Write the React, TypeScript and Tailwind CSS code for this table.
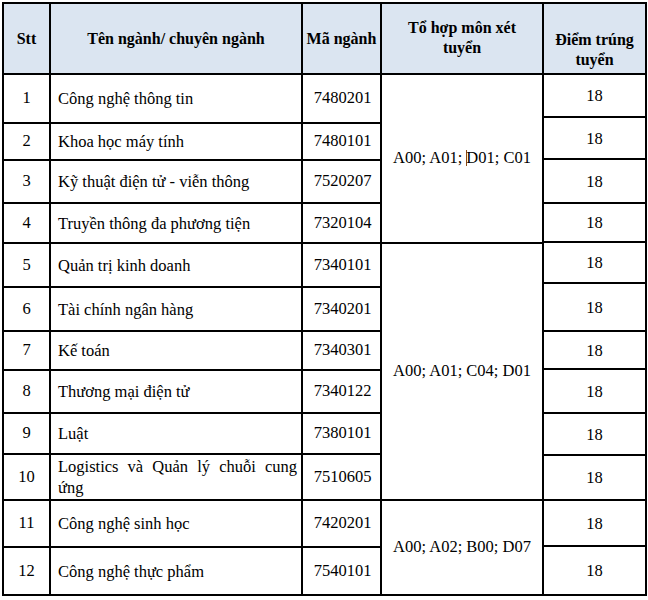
import React from 'react';

type Row = { stt: number; name: string; code: string; h: number };

const rows: Row[] = [
  { stt: 1, name: 'Công nghệ thông tin', code: '7480201', h: 49 },
  { stt: 2, name: 'Khoa học máy tính', code: '7480101', h: 37 },
  { stt: 3, name: 'Kỹ thuật điện tử - viễn thông', code: '7520207', h: 43 },
  { stt: 4, name: 'Truyền thông đa phương tiện', code: '7320104', h: 40 },
  { stt: 5, name: 'Quản trị kinh doanh', code: '7340101', h: 44 },
  { stt: 6, name: 'Tài chính ngân hàng', code: '7340201', h: 44 },
  { stt: 7, name: 'Kế toán', code: '7340301', h: 39 },
  { stt: 8, name: 'Thương mại điện tử', code: '7340122', h: 43 },
  { stt: 9, name: 'Luật', code: '7380101', h: 41 },
  { stt: 10, name: 'Logistics và Quản lý chuỗi cung ứng', code: '7510605', h: 46 },
  { stt: 11, name: 'Công nghệ sinh học', code: '7420201', h: 47 },
  { stt: 12, name: 'Công nghệ thực phẩm', code: '7540101', h: 48 },
];

// the score column's lines don't quite line up with the rest in the source
const scoreHeights = [43, 42, 44, 39, 41, 48, 38, 44, 42, 45, 46, 49];

export default function App() {
  return (
    <div className="w-[648px] h-[600px] bg-white pt-[2px] pl-[2px]">
      <div className="w-[645px] border-2 border-black text-black font-['Liberation_Serif']">
        {/* header */}
        <div className="flex h-[69px] bg-[#dbe5f1] font-bold text-[16px] leading-[20px] text-center">
          <div className="w-[45px] flex items-center justify-center">Stt</div>
          <div className="w-[252px] border-l-2 border-black flex items-center justify-center">
            Tên ngành/ chuyên ngành
          </div>
          <div className="w-[79px] border-l-2 border-black flex items-center justify-center">Mã ngành</div>
          <div className="w-[162px] border-l-2 border-black flex items-center justify-center pb-[2px]">
            <span>
              Tổ hợp môn xét
              <br />
              tuyển
            </span>
          </div>
          <div className="flex-1 border-l-2 border-black flex items-center justify-center pt-[22px]">
            <span>
              Điểm trúng
              <br />
              tuyển
            </span>
          </div>
        </div>

        {/* body */}
        <div className="flex text-[16.5px]">
          <div className="w-[376px] flex flex-col">
            {rows.map((r) => (
              <div key={r.stt} className="flex border-t-2 border-black" style={{ height: r.h }}>
                <div className="w-[45px] flex items-center justify-center">{r.stt}</div>
                <div className="w-[252px] border-l-2 border-black flex items-center pl-[7px] pr-[4px]">
                  <span className="block w-full text-justify leading-[21px]">{r.name}</span>
                </div>
                <div className="w-[79px] border-l-2 border-black flex items-center justify-center pl-[2px]">
                  {r.code}
                </div>
              </div>
            ))}
          </div>

          <div className="w-[162px] border-l-2 border-black flex flex-col">
            <div className="h-[169px] border-t-2 border-black flex items-center justify-center">
              <span>
                A00; A01; <span className="inline-block w-[1px] h-[16px] align-[-3px] bg-[#8a4a14] -mr-[1px]" />
                D01; C01
              </span>
            </div>
            <div className="h-[257px] border-t-2 border-black flex items-center justify-center">
              A00; A01; C04; D01
            </div>
            <div className="h-[95px] border-t-2 border-black flex items-center justify-center">
              A00; A02; B00; D07
            </div>
          </div>

          <div className="flex-1 border-l-2 border-black flex flex-col">
            {scoreHeights.map((h, i) => (
              <div
                key={i}
                className="border-t-2 border-black flex items-center justify-center pt-[2px]"
                style={{ height: h }}
              >
                18
              </div>
            ))}
          </div>
        </div>
      </div>
    </div>
  );
}
